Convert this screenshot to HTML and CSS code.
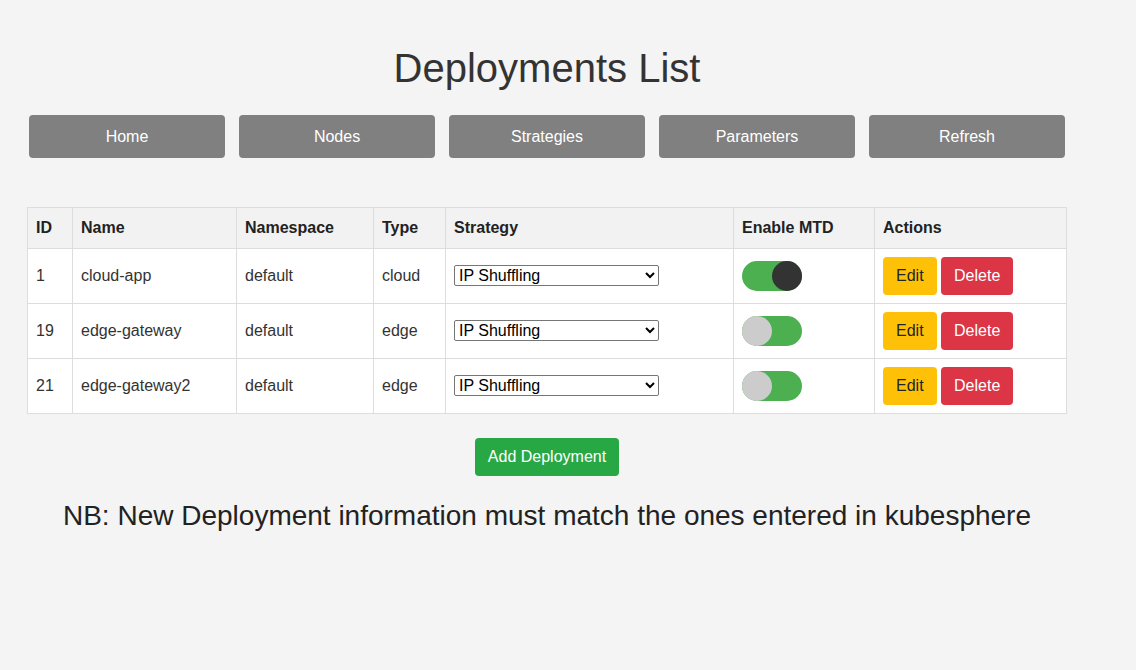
FILE: index.html
```html
<!DOCTYPE html>
<html>
<head>
<meta charset="utf-8">
<link rel="stylesheet" href="styles.css">
</head>
<body>
<div class="container">
  <h1 class="title">Deployments List</h1>
  <nav class="nav">
    <button class="nav-btn">Home</button>
    <button class="nav-btn">Nodes</button>
    <button class="nav-btn">Strategies</button>
    <button class="nav-btn">Parameters</button>
    <button class="nav-btn">Refresh</button>
  </nav>
  <table class="table">
    <colgroup>
      <col class="c-id"><col class="c-name"><col class="c-ns"><col class="c-type"><col class="c-strat"><col class="c-mtd"><col class="c-act">
    </colgroup>
    <thead>
      <tr><th>ID</th><th>Name</th><th>Namespace</th><th>Type</th><th>Strategy</th><th>Enable MTD</th><th>Actions</th></tr>
    </thead>
    <tbody>
      <tr>
        <td>1</td><td>cloud-app</td><td>default</td><td>cloud</td>
        <td><select class="sel"><option>IP Shuffling</option></select></td>
        <td><span class="toggle on"><span class="knob"></span></span></td>
        <td><button class="btn edit">Edit</button> <button class="btn del">Delete</button></td>
      </tr>
      <tr>
        <td>19</td><td>edge-gateway</td><td>default</td><td>edge</td>
        <td><select class="sel"><option>IP Shuffling</option></select></td>
        <td><span class="toggle"><span class="knob"></span></span></td>
        <td><button class="btn edit">Edit</button> <button class="btn del">Delete</button></td>
      </tr>
      <tr>
        <td>21</td><td>edge-gateway2</td><td>default</td><td>edge</td>
        <td><select class="sel"><option>IP Shuffling</option></select></td>
        <td><span class="toggle"><span class="knob"></span></span></td>
        <td><button class="btn edit">Edit</button> <button class="btn del">Delete</button></td>
      </tr>
    </tbody>
  </table>
  <div class="add-row"><button class="btn add">Add Deployment</button></div>
  <p class="note">NB: New Deployment information must match the ones entered in kubesphere</p>
</div>
</body>
</html>
```
FILE: styles.css
```css
html, body {
  margin: 0;
  padding: 0;
  background: #f4f4f4;
  font-family: "Liberation Sans", Arial, sans-serif;
  color: #333;
}
.container {
  width: 1040px;
  margin-left: 27px;
  padding-top: 45px;
}
.title {
  margin: 0;
  font-size: 40px;
  line-height: 46px;
  font-weight: normal;
  text-align: center;
  color: #333;
}
.nav {
  display: flex;
  gap: 14px;
  padding-left: 2px;
  margin-top: 24px;
}
.nav-btn {
  width: 196px;
  height: 43px;
  border: none;
  border-radius: 4px;
  background: #808080;
  color: #fff;
  font-family: inherit;
  font-size: 16px;
  padding: 0;
}
.table {
  margin-top: 49px;
  width: 1040px;
  border-collapse: collapse;
  table-layout: fixed;
  background: #fff;
  font-size: 16px;
}
.c-id { width: 45px; }
.c-name { width: 164px; }
.c-ns { width: 137px; }
.c-type { width: 72px; }
.c-strat { width: 288px; }
.c-mtd { width: 141px; }
.c-act { width: 192px; }
.table th, .table td {
  border: 1px solid #ddd;
  text-align: left;
  padding: 8px;
  line-height: 18px;
  vertical-align: middle;
}
.table th {
  background: #f2f2f2;
  font-weight: bold;
  color: #222;
  padding-top: 11px;
  padding-bottom: 11px;
}
.table td {
  color: #333;
  height: 38px;
}
.sel {
  width: 205px;
  height: 21px;
  font-family: inherit;
  font-size: 16px;
  font-weight: normal;
  color: #000;
  background: #fff;
  border: 1px solid #767676;
  border-radius: 2px;
  padding: 0;
  margin-top: -2px;
  vertical-align: middle;
}
.toggle {
  display: inline-block;
  position: relative;
  width: 60px;
  height: 30px;
  border-radius: 15px;
  background: #4caf50;
  vertical-align: middle;
}
.knob {
  position: absolute;
  top: 0;
  left: 0;
  width: 30px;
  height: 30px;
  border-radius: 50%;
  background: #ccc;
}
.toggle.on .knob {
  left: 30px;
  background: #333;
}
.btn {
  border: none;
  border-radius: 4px;
  font-family: inherit;
  font-size: 16px;
  line-height: 18px;
  padding: 10px 13px;
  vertical-align: middle;
}
.edit { background: #ffc107; color: #212529; }
.del { background: #dc3545; color: #fff; }
.add-row {
  margin-top: 24px;
  text-align: center;
}
.add { background: #28a745; color: #fff; }
.note {
  margin: 24px 0 0;
  font-size: 28px;
  line-height: 32px;
  text-align: center;
  color: #222;
}
```
